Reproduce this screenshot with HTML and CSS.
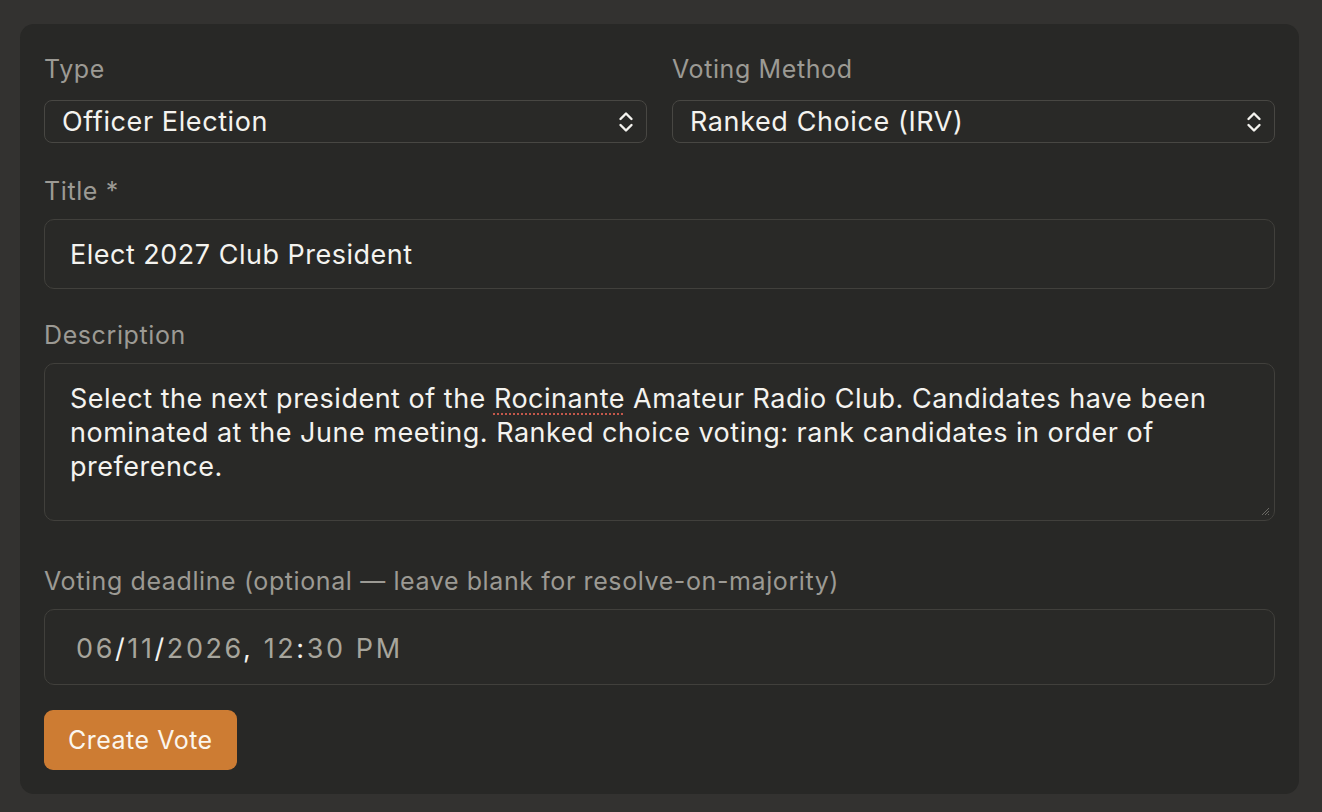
FILE: index.html
```html
<!DOCTYPE HTML>
<html>

<head>
    <meta charset="UTF-8">
    <title>Create Vote</title>
    <link rel="stylesheet" href="styles.css">
</head>

<body>
    <form class="card">
        <div class="row">
            <div class="field first">
                <label>Type</label>
                <div class="select-wrap">
                    <select class="select">
                        <option>Officer Election</option>
                    </select>
                    <svg class="chevrons" width="18" height="24" viewBox="0 0 18 24">
                        <path d="M3.5 9 L9 3.5 L14.5 9" />
                        <path d="M3.5 15 L9 20.5 L14.5 15" />
                    </svg>
                </div>
            </div>
            <div class="field first">
                <label>Voting Method</label>
                <div class="select-wrap">
                    <select class="select">
                        <option>Ranked Choice (IRV)</option>
                    </select>
                    <svg class="chevrons" width="18" height="24" viewBox="0 0 18 24">
                        <path d="M3.5 9 L9 3.5 L14.5 9" />
                        <path d="M3.5 15 L9 20.5 L14.5 15" />
                    </svg>
                </div>
            </div>
        </div>

        <div class="field title">
            <label>Title *</label>
            <input class="input" type="text" value="Elect 2027 Club President">
        </div>

        <div class="field">
            <label>Description</label>
            <div class="textarea">Select the next president of the <span class="misspelled">Rocinante</span> Amateur Radio Club. Candidates have been nominated at the June meeting. Ranked choice voting: rank candidates in order of preference.<svg class="grip" width="10" height="10" viewBox="0 0 10 10">
                    <path d="M9 2 L2 9 M9 5 L5 9 M9 8 L8 9" />
                </svg></div>
        </div>

        <div class="field deadline">
            <label>Voting deadline (optional — leave blank for resolve-on-majority)</label>
            <div class="input date"><span class="seg">06</span><span class="sep">/</span><span class="seg">11</span><span class="sep">/</span><span class="seg">2026</span><span class="sep">,</span> <span class="seg">12</span><span class="sep">:</span><span class="seg">30</span> <span class="seg">PM</span></div>
        </div>

        <div>
            <button type="button" class="button">Create Vote</button>
        </div>
    </form>
</body>

</html>
```

FILE: styles.css
```css
body {
    margin: 0;
    padding: 24px 23px 19px 20px;
    background-color: #333230;
    font-family: Inter, "Noto Sans", sans-serif;
    color: #f2f1ec;
}

.card {
    background-color: #282826;
    border-radius: 14px;
    padding: 30px 24px 24px 24px;
    display: flex;
    flex-direction: column;
}

.row {
    display: grid;
    grid-template-columns: 1fr 1fr;
    gap: 25px;
    margin-bottom: 33px;
}

.field {
    display: flex;
    flex-direction: column;
    margin-bottom: 32px;
}

.field.first {
    margin-bottom: 0;
}

.field.title {
    margin-bottom: 31px;
}

.field label {
    font-size: 25px;
    line-height: 30px;
    letter-spacing: 0.6px;
    color: #9c9a94;
    margin-bottom: 13px;
}

.field.first label {
    margin-bottom: 16px;
}

.select-wrap {
    position: relative;
}

.select {
    appearance: none;
    width: 100%;
    height: 43px;
    box-sizing: border-box;
    background-color: #292927;
    border: 1.5px solid #484743;
    border-radius: 8px;
    color: #f4f3ef;
    font-family: inherit;
    font-size: 27px;
    letter-spacing: 0.6px;
    padding: 0 17px;
    outline: none;
}

.chevrons {
    position: absolute;
    right: 12px;
    top: 10px;
    pointer-events: none;
}

.chevrons path {
    fill: none;
    stroke: #f4f3ef;
    stroke-width: 2.4;
    stroke-linecap: round;
    stroke-linejoin: round;
}

.input {
    box-sizing: border-box;
    width: 100%;
    height: 70px;
    background-color: #292927;
    border: 1.5px solid #41403c;
    border-radius: 10px;
    color: #f4f3ef;
    font-family: inherit;
    font-size: 27px;
    letter-spacing: 0.5px;
    padding: 0 25px;
    outline: none;
}

.textarea {
    position: relative;
    box-sizing: border-box;
    height: 158px;
    background-color: #292927;
    border: 1.5px solid #41403c;
    border-radius: 10px;
    font-size: 27px;
    line-height: 34px;
    letter-spacing: 0.5px;
    padding: 18px 25px;
    color: #f4f3ef;
}

.misspelled {
    text-decoration: underline dotted #c4584b;
    text-decoration-thickness: 2px;
    text-underline-offset: 5px;
}

.grip {
    position: absolute;
    right: 4px;
    bottom: 4px;
}

.grip path {
    stroke: #6a6964;
    stroke-width: 1;
}

.field.deadline {
    margin-top: 13px;
    margin-bottom: 25px;
}

.date {
    height: 76px;
    line-height: 78px;
    padding-left: 31px;
    letter-spacing: 2.6px;
    white-space: pre;
}

.date .seg {
    color: #a7a59c;
}

.date .sep {
    color: #f4f3ef;
}

.button {
    background-color: #cd7c33;
    color: #fbf6ee;
    border: none;
    border-radius: 9px;
    height: 60px;
    padding: 0 24px;
    font-family: inherit;
    font-size: 25px;
    letter-spacing: 0.5px;
    cursor: pointer;
}
```
